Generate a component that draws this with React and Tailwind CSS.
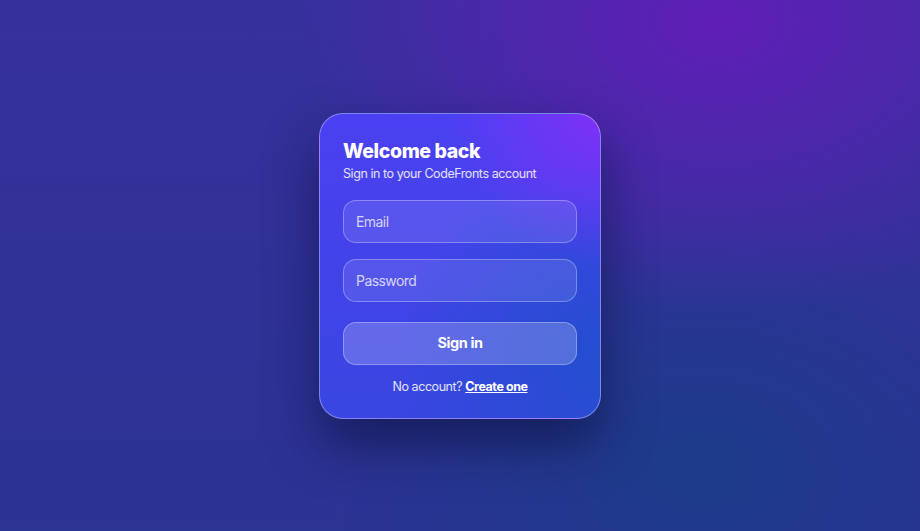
import React from "react";

const App = () => {
  return (
    <div
      className="w-full h-[531px] flex items-center justify-center bg-[#302f94] bg-[radial-gradient(ellipse_45%_55%_at_78%_4%,rgba(98,30,185,0.95),transparent),radial-gradient(ellipse_40%_50%_at_76%_88%,rgba(28,60,138,0.95),transparent),linear-gradient(180deg,#36309c,#2b3393)]"
      style={{ fontFamily: "Inter, 'Noto Sans', sans-serif" }}
    >
      {/* Card */}
      <div className="w-[282px] rounded-3xl border border-white/35 px-[23px] pt-[25px] pb-[21px] shadow-[0_26px_50px_rgba(10,15,60,0.6)] bg-[radial-gradient(circle_at_100%_0%,rgba(128,48,248,0.95),transparent_36%),radial-gradient(circle_at_100%_80%,rgba(34,78,205,0.95),transparent_55%),linear-gradient(180deg,#4b40f2,#3946e0)]">
        <h1 className="text-[19.5px] font-extrabold leading-[25px] text-white tracking-[-0.02em]">
          Welcome back
        </h1>
        <p className="text-[12.5px] leading-5 text-white/85 tracking-[-0.035em]">
          Sign in to your CodeFronts account
        </p>

        <div className="mt-[16px] flex flex-col gap-4">
          <input
            type="email"
            placeholder="Email"
            className="h-[43px] w-full rounded-[13px] border border-white/30 bg-white/10 px-3 text-[14px] tracking-[-0.04em] text-white placeholder:text-white/75 outline-none"
          />
          <input
            type="password"
            placeholder="Password"
            className="h-[43px] w-full rounded-[13px] border border-white/30 bg-white/10 px-3 text-[14px] tracking-[-0.04em] text-white placeholder:text-white/75 outline-none"
          />
        </div>

        <button className="mt-5 h-[43px] w-full rounded-[13px] border border-white/30 bg-white/20 text-[14.5px] tracking-[-0.03em] font-bold text-white">
          Sign in
        </button>

        <p className="mt-3 text-center text-[12.5px] leading-5 tracking-[-0.035em] text-white/85">
          No account?{" "}
          <a href="#" className="font-bold text-white underline">
            Create one
          </a>
        </p>
      </div>
    </div>
  );
};

export default App;
